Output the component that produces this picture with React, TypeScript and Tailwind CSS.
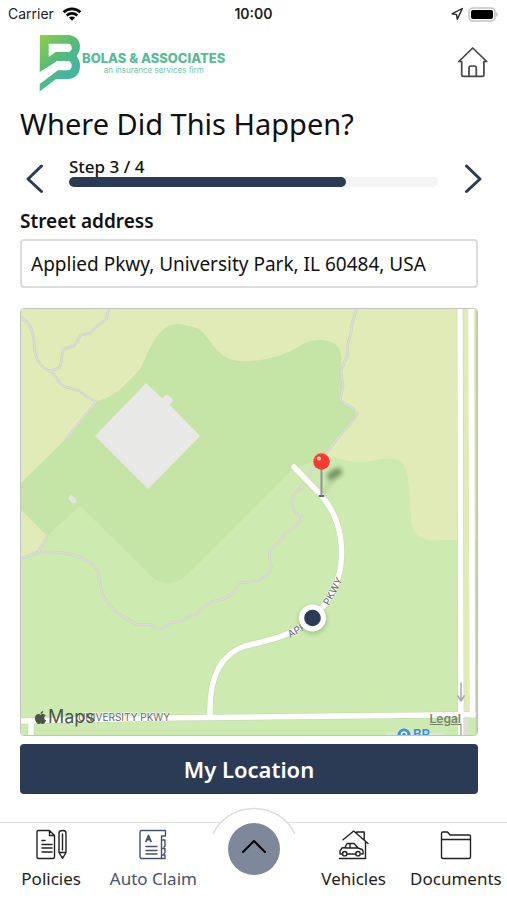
import React from 'react';
import { FaApple } from 'react-icons/fa';

interface TabProps {
  label: string;
  active?: boolean;
  children: React.ReactNode;
}

function StatusBar() {
  return (
    <div className="grid h-7 grid-cols-3 items-center px-2 font-['Inter',sans-serif] text-sm text-[#222]">
      <div className="flex items-center gap-2">
        <span>Carrier</span>
        <svg width="20" height="14" viewBox="0 0 20 14" fill="none" stroke="#000" strokeWidth="2.6">
          <path d="M1.6 5.2C6.4.7 13.6.7 18.4 5.2" />
          <path d="M4.7 8.5c3-2.8 7.6-2.8 10.6 0" />
          <path d="M7 10.6c1.8-1.5 4.2-1.5 6 0L10 13.8z" fill="#000" stroke="none" />
        </svg>
      </div>
      <span className="text-center font-semibold">10:00</span>
      <div className="flex items-center justify-end gap-1">
        <svg width="14" height="14" viewBox="0 0 14 14" fill="none" stroke="#222" strokeWidth="1.4" strokeLinejoin="round">
          <path d="M12.300 1.500 2 6.800l4.500.8.8 4.600z" />
        </svg>
        <svg width="31" height="15" viewBox="0 0 31 15">
          <rect x="1" y="1" width="26" height="13" rx="4" fill="#fff" stroke="#c4c4c4" strokeWidth="1.6" />
          <rect x="3" y="3" width="22" height="9" rx="2" fill="#000" />
          <path d="M28.4 5c1.700.7 1.700 4.300 0 5z" fill="#b5b5b5" />
        </svg>
      </div>
    </div>
  );
}

function Logo() {
  return (
    <div className="flex">
      <svg width="44" height="60" viewBox="0 0 44 60">
        <defs>
          <linearGradient id="brand" x1="0" y1="0" x2="0.7" y2="1">
            <stop offset="0" stopColor="#8ed04b" />
            <stop offset="0.45" stopColor="#58bd74" />
            <stop offset="0.8" stopColor="#43b5a2" />
            <stop offset="1" stopColor="#4cb98a" />
          </linearGradient>
        </defs>
        <path
          fill="url(#brand)"
          fillRule="evenodd"
          d="M2 1h28c7 0 12 5 12 11 0 4-1 7-3.500 10C41 25 42 28 42 32c0 8-5 13-12 13H18L1.700 57.500V50L20 36.300h10c5 0 5-9.300 0-9.300H19.300L1.700 38zM10.700 9.700V23l6.800-5H30c5 0 5-8.300 0-8.300z"
        />
      </svg>
      <div className="flex flex-col pt-4 text-center font-['Inter',sans-serif]">
        <span className="text-[13px]/4 font-extrabold text-[#55bc95]">BOLAS &amp; ASSOCIATES</span>
        <span className="text-[8px]/[8px] text-[#6cc5ab]">an insurance services firm</span>
      </div>
    </div>
  );
}

function HomeIcon() {
  return (
    <svg width="32" height="32" viewBox="0 0 32 32" fill="none" stroke="#444" strokeWidth="1.7" strokeLinecap="round" strokeLinejoin="round">
      <path d="M1.800 15.500 15.700 2l14 13.500M1.800 15.500h2.900V29c0 1 .4 1.400 1.400 1.400h19.400c1 0 1.400-.4 1.400-1.400V15.500h2.800" />
      <path d="M12 30V22.300c0-1.800 1-2.300 2-2.300h3.300c1 0 2 .5 2 2.300V30" />
    </svg>
  );
}

function Trails() {
  return (
    <>
      <path d="M20 316C28 320 33 327 34 340 34 355 38 365 50 370 56 373 57 383 66 386L80 390 86 395 96 401 66 438" />
      <path d="M50 370 59 367C64 360 60 351 64 348L74 345 81 334 90 332 97 325 106 319 109 307" />
      <path d="M357 307 352 323 351 332 348 342 347 355 341 370 343 385 340 399C343 405 354 404 357 413 354 421 334 439 325 454L311 470 305 482 293 495C290 504 293 512 303 516L296 525 284 533 280 541 270 548C267 558 274 563 270 570 266 578 258 580 250 581L240 582 235 589C229 597 224 598 211 601L202 607 196 614 190 614 183 620 170 622C164 629 157 629 151 624L136 623 120 614C104 601 101 595 98 570 93 560 75 551 50 551L38 551 20 558M38 551 47 536" />
    </>
  );
}

function Roads() {
  return (
    <>
      <path d="M294 466 321 494C336 512 342 530 341.500 555 341 580 330 600 314 616 292 636 265 640 245 645 218 654 209 680 210 714" />
      <path d="M18 720 160 717 478 713.500M31 720V740M460 300 461 740" />
    </>
  );
}

function MapView() {
  return (
    <div className="relative overflow-hidden rounded border border-[#c3c3c3]">
      <svg className="block h-auto w-full" viewBox="21 308 456 426" fill="none" strokeLinecap="round" strokeLinejoin="round">
        <defs>
          <filter id="soft" filterUnits="userSpaceOnUse" x="280" y="440" width="100" height="220">
            <feGaussianBlur stdDeviation="2.500" />
          </filter>
        </defs>
        <rect x="20" y="307" width="460" height="430" fill="#cdebb1" />

        {/* fields */}
        <path
          fill="#e0ebb7"
          d="M20 307H480V539H440C420 541 411 534 411 515 410 495 409 475 404 464 398 455 385 457 372 460 355 464 345 458 325 455L20 500z"
        />
        <path fill="#e0ebb7" d="M20 500 47 534 38 550 20 557z" />
        <path fill="#cdebb1" d="M325 455 C345 458 355 464 372 460L372 520 250 520 250 500z" />
        <path fill="#e0ebb7" d="M464 307H470L472 715H464z" />
        <path
          fill="#c4e5a5"
          d="M20 483 66 438 96 400C112 398 124 386 140 368 148 354 151 338 164 328 174 321 183 323 187 325 198 324 206 334 212 343 221 354 229 360 240 360 265 361 284 354 300 345 313 337 330 337 338 346 342 352 342 360 341 370L343 385 340 400 356 410V416L325 455 293 468 250 511 190 571C176 586 160 584 150 574L80 505 47 535 20 508z"
        />

        {/* building */}
        <path fill="#e8e8e6" d="M146 382 162 397 167 393.500 173.500 399 169.500 404 200 435 148 488 95 435z" />
        <path stroke="#e3e6e0" strokeWidth="5" d="m71 497 3 3" />

        <g stroke="#c9d2bd" strokeWidth="2.600">
          <Trails />
        </g>
        <g stroke="#dcdcd8" strokeWidth="1.600">
          <Trails />
        </g>

        <g stroke="#c2d6af" strokeWidth="6.500">
          <Roads />
        </g>
        <g stroke="#fff" strokeWidth="5.500">
          <Roads />
          <path d="M471 300 472.500 714" />
        </g>
        <path stroke="#dedfd6" strokeWidth="5" d="M466 718V740" />
        <path stroke="#c6cbb9" strokeWidth="1.500" d="M476.500 300V740" />
        <path stroke="#aaa" strokeWidth="1.500" d="M461 682V700M458 695 461 700 464 695M461 723V736" />

        {/* road labels */}
        <g fill="#666" stroke="#fff" strokeWidth="1" paintOrder="stroke" fontFamily="Inter, sans-serif" fontSize="10">
          <text x="170" y="720" textAnchor="end">UNIVERSITY PKWY</text>
          <text transform="translate(290 637) rotate(-28)">APPL</text>
          <text transform="translate(329 605) rotate(-62)">PKWY</text>
        </g>

        {/* gas station */}
        <path stroke="#e2e5d5" strokeWidth="4" d="M387 734H442" />
        <circle cx="404" cy="734" r="6.500" fill="#3b8eea" />
        <circle cx="404" cy="733.500" r="2.500" stroke="#fff" strokeWidth="1.500" />
        <text x="413" y="738" fill="#3b8eea" fontFamily="Inter, sans-serif" fontSize="13" fontWeight="600">BP</text>

        {/* current position */}
        <circle cx="313" cy="619" r="14" fill="#7a9a66" opacity="0.5" filter="url(#soft)" />
        <circle cx="312.500" cy="617" r="13.500" fill="#fff" />
        <circle cx="312.500" cy="617" r="8.300" fill="#2b3b55" />

        {/* pin */}
        <path stroke="#5c7a4b" strokeWidth="8" opacity="0.8" filter="url(#soft)" d="M331 475 338 471" />
        <path stroke="#7d9a6e" strokeWidth="3" opacity="0.4" filter="url(#soft)" d="M322 494 334 476" />
        <path stroke="#909497" strokeWidth="2" d="M321.500 468V494" />
        <path stroke="#666" strokeWidth="2" d="M319.500 495H323.500" />
        <circle cx="321.500" cy="460.500" r="8.300" fill="#fd3b30" />
        <circle cx="319" cy="457.500" r="2" fill="#ffd5d2" />
      </svg>
      <div className="absolute bottom-2 left-3 flex items-center font-['Inter',sans-serif] text-lg/5 text-[#4a5743]">
        <FaApple size={15} />
        <span>Maps</span>
      </div>
      <a href="#legal" className="absolute right-4 bottom-2 font-['Inter',sans-serif] text-xs font-semibold text-[#788570] underline">
        Legal
      </a>
    </div>
  );
}

function Tab({ label, active, children }: TabProps) {
  return (
    <a href="#tab" className={`flex flex-1 flex-col items-center gap-1 pt-1 ${active ? 'text-[#46536b]' : 'text-[#222]'}`}>
      <svg width="32" height="36" viewBox="0 -1 32 36" fill="none" stroke="currentColor" strokeWidth="1.400" strokeLinecap="round" strokeLinejoin="round">
        {children}
      </svg>
      <span className="text-[17px]/6">{label}</span>
    </a>
  );
}

export default function App() {
  const step = 3;
  const totalSteps = 4;

  return (
    <div className="flex min-h-screen flex-col bg-white font-['Noto_Sans',sans-serif] text-[#111]">
      <StatusBar />
      <header className="flex h-17 items-start justify-between pt-[6px] pr-[18px] pl-[38px]">
        <Logo />
        <button type="button" aria-label="Home" className="mt-3">
          <HomeIcon />
        </button>
      </header>

      <main className="flex-1 pr-[29px] pb-3 pl-5">
        <h1 className="pt-2 text-[29px]/10">Where Did This Happen?</h1>

        <div className="mt-[13px] flex items-start justify-between">
          <button type="button" aria-label="Previous step" className="w-[49px] pt-[6px] pl-1">
            <svg width="20" height="32" viewBox="0 0 20 32" fill="none" stroke="#2b3b55" strokeWidth="3" strokeLinecap="round" strokeLinejoin="round">
              <path d="M17.500 3 4 16l13.500 12.500" />
            </svg>
          </button>
          <div className="flex-1">
            <p className="text-[17px]/5 font-medium">Step {step} / {totalSteps}</p>
            <div className="h-[10px] rounded-full bg-[#f4f4f4]">
              <div
                className="h-full rounded-full bg-[#2b3b55]"
                style={{ width: `${(step / totalSteps) * 100}%` }}
              />
            </div>
          </div>
          <button type="button" aria-label="Next step" className="-mr-[6px] flex w-[46px] justify-end pt-[6px]">
            <svg width="20" height="32" viewBox="0 0 20 32" fill="none" stroke="#2b3b55" strokeWidth="3" strokeLinecap="round" strokeLinejoin="round">
              <path d="m2.500 3 13.500 13-13.500 12.500" />
            </svg>
          </button>
        </div>

        <label htmlFor="address" className="mt-3 block text-[19px]/7 font-semibold">
          Street address
        </label>
        <input
          id="address"
          type="text"
          defaultValue="Applied Pkwy, University Park, IL 60484, USA"
          className="mt-1 block h-[49px] w-full rounded-sm border-2 border-[#dcdcdc] px-[9px] text-[19px] outline-none"
        />

        <div className="mt-5">
          <MapView />
        </div>

        <button type="button" className="mt-2 h-[50px] w-full rounded bg-[#2b3b55] text-[22px] font-semibold text-white">
          My Location
        </button>
      </main>

      <nav className="flex h-[78px] border-t border-[#ddd]">
        <Tab label="Policies">
          <path d="M3.500 2.500h11l5 5V29c0 1-.5 1.500-1.500 1.500H3.500c-1 0-1.500-.5-1.500-1.500V4c0-1 .5-1.500 1.500-1.500zM14.500 2.500v5h5M7 12.500h3M7 16.500h10M7 20h10M7 24h10" />
          <path d="M24 5c0-3.300 7-3.300 7 0v19.500L27.500 30.500 24 24.500zM24 24.500h7M27.500 6v16M26.500 29h2" />
        </Tab>
        <Tab label="Auto Claim" active>
          <path d="M28.500 8V2.500H4.500c-1 0-1.500.5-1.500 1.500v25c0 1 .5 1.500 1.500 1.500h20V12M28.500 8h-4v4h3.500v6l-1 1M24.500 20.500h3.500v4l-1 1M24.500 27h3.500v3.500h-3.500M9 18.500h11M9 22.500h11M9 26h11" />
          <path strokeWidth="1.800" d="m9 13.500 2.500-6 2.500 6M10 11.500h3" />
        </Tab>
        <div className="relative flex w-[98px] justify-center">
          <svg className="absolute -top-4 left-1/2 -translate-x-1/2" width="86" height="28" viewBox="0 0 86 28">
            <path d="M2 27C18-7 68-7 84 27" fill="#fff" stroke="#ddd" strokeWidth="1.500" />
          </svg>
          <button
            type="button"
            aria-label="Open menu"
            className="relative flex size-[52px] items-center justify-center rounded-full bg-[#7d899a]"
          >
            <svg width="26" height="20" viewBox="0 0 26 20" fill="none" stroke="#000" strokeWidth="2" strokeLinecap="round" strokeLinejoin="round">
              <path d="M2 13 13 2l11 11" />
            </svg>
          </button>
        </div>
        <Tab label="Vehicles">
          <path d="M5 11.700 15.700 3 30 15.500M18.700 5V4h7.500v8M27.500 14v16.500H1.500" />
          <path d="M4.500 26H2v-3l2-3 3-.5 2-4h7l4 4.500 4 1.500c1 .5 1.500 3 1 4.500h-1.500M9 26h8.500M7 20h13M12 15.500V20" />
          <circle cx="6.700" cy="25.700" r="2.200" />
          <circle cx="20" cy="25.700" r="2.200" />
        </Tab>
        <Tab label="Documents">
          <path d="M1.500 29V5.500c0-1 .5-1.500 1.500-1.500h4.500l2.500 3h19c1 0 1.500.5 1.500 1.500V29c0 1-.5 1.500-1.500 1.500H3c-1 0-1.500-.5-1.500-1.500zM1.500 11.500h29" />
        </Tab>
      </nav>
    </div>
  );
}
